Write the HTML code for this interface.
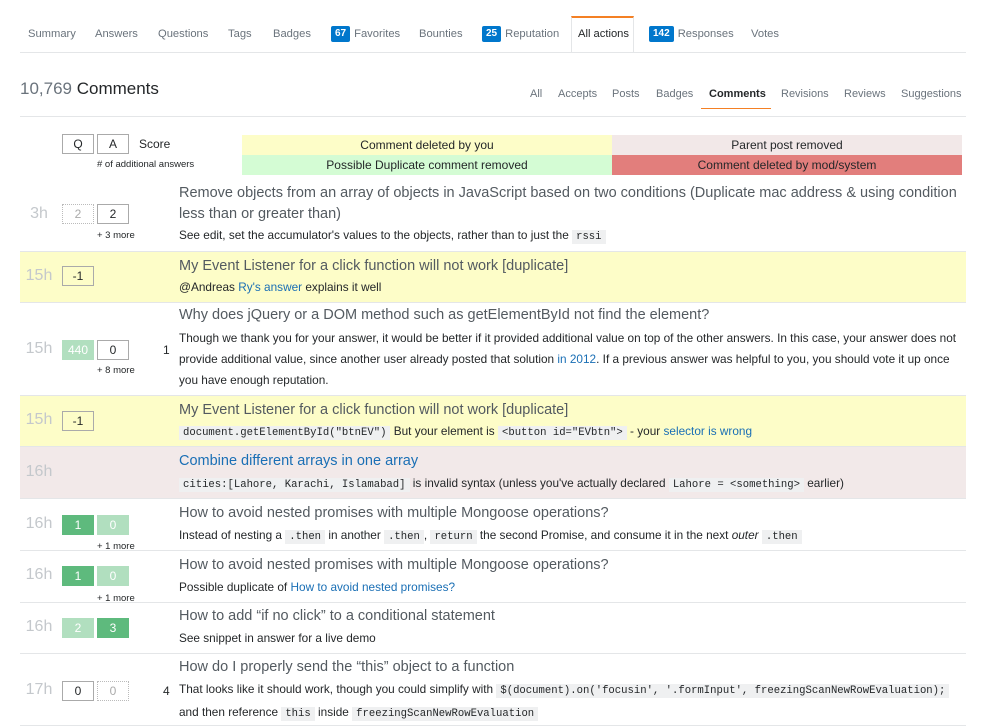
<!DOCTYPE html>
<html><head><meta charset="utf-8"><style>
*{margin:0;padding:0;box-sizing:border-box}
body{width:1008px;height:728px;overflow:hidden;background:#fff;font-family:"Liberation Sans",Arial,sans-serif;color:#242729;position:relative}
.a{position:absolute;white-space:nowrap}
.tab{position:absolute;top:28px;font-size:11.2px;color:#6a737c;line-height:13px}
.bdg{display:inline-block;background:#0077cc;color:#fff;font-size:10px;font-weight:bold;padding:2px 4px;border-radius:2px;margin-right:4px;line-height:12px;vertical-align:top;margin-top:-2px}
.st{position:absolute;top:88px;font-size:11px;color:#6a737c}
.box{position:absolute;width:32px;height:20px;border:1px solid #aaa;font-size:12px;text-align:center;line-height:18px;color:#242729}
.dot{border:1px dotted #bbb;color:#aaa}
.g1{background:#5eba7d;border-color:#5eba7d;color:#fff}
.g2{background:#b1dfbf;border-color:#b1dfbf;color:#fff}
.row{position:absolute;left:20px;width:946px;border-bottom:1px solid #e4e6e8}
.tm{position:absolute;left:0;width:38px;text-align:center;font-size:16px;color:#c4c8cc}
.tt{position:absolute;left:159px;font-size:14.5px;color:#535a60;line-height:21px}
.cm{position:absolute;left:159px;font-size:11.8px;color:#242729;line-height:21px;white-space:nowrap}
.more{position:absolute;left:77px;font-size:9.5px;color:#242729}
code{font-family:"Liberation Mono",monospace;font-size:10.6px;background:#eff0f1;padding:1px 4px}
.lk{color:#1a6fb5}
.y{background:#fdfdc8}.p{background:#f2e9e9}
</style></head><body>
<div class="tab" style="left:28px">Summary</div>
<div class="tab" style="left:95px">Answers</div>
<div class="tab" style="left:158px">Questions</div>
<div class="tab" style="left:228px">Tags</div>
<div class="tab" style="left:273px">Badges</div>
<div class="tab" style="left:331px"><span class="bdg">67</span>Favorites</div>
<div class="tab" style="left:419px">Bounties</div>
<div class="tab" style="left:482px"><span class="bdg">25</span>Reputation</div>
<div class="a" style="left:571px;top:16px;width:63px;height:37px;border:1px solid #e4e6e8;border-top:2px solid #f48024;border-bottom:none;background:#fff"></div>
<div class="tab" style="left:578px;color:#242729">All actions</div>
<div class="tab" style="left:649px"><span class="bdg">142</span>Responses</div>
<div class="tab" style="left:751px">Votes</div>
<div class="a" style="left:20px;top:52px;width:946px;height:1px;background:#e4e6e8"></div>

<div class="a" style="left:20px;top:79px;font-size:17px;color:#242729"><span style="color:#6a737c">10,769</span> Comments</div>
<div class="st" style="left:530px">All</div>
<div class="st" style="left:558px">Accepts</div>
<div class="st" style="left:612px">Posts</div>
<div class="st" style="left:656px">Badges</div>
<div class="st" style="left:709px;color:#242729;font-weight:bold">Comments</div>
<div class="a" style="left:701px;top:108px;width:70px;height:1px;background:#f48024"></div>
<div class="st" style="left:781px">Revisions</div>
<div class="st" style="left:844px">Reviews</div>
<div class="st" style="left:901px">Suggestions</div>
<div class="a" style="left:20px;top:116px;width:946px;height:1px;background:#e4e6e8"></div>

<div class="box" style="left:62px;top:134px">Q</div>
<div class="box" style="left:97px;top:134px">A</div>
<div class="a" style="left:139px;top:137px;font-size:12px">Score</div>
<div class="a" style="left:97px;top:159px;font-size:9.5px"># of additional answers</div>
<div class="a y" style="left:242px;top:135px;width:370px;height:20px;text-align:center;font-size:12px;line-height:20px">Comment deleted by you</div>
<div class="a" style="left:612px;top:135px;width:350px;height:20px;background:#f2e8e8;text-align:center;font-size:12px;line-height:20px">Parent post removed</div>
<div class="a" style="left:242px;top:155px;width:370px;height:20px;background:#d4fcd4;text-align:center;font-size:12px;line-height:20px">Possible Duplicate comment removed</div>
<div class="a" style="left:612px;top:155px;width:350px;height:20px;background:#e27e7c;text-align:center;font-size:12px;line-height:20px">Comment deleted by mod/system</div>

<div class="row" style="top:183px;height:69px">
<div class="tm" style="top:22px">3h</div>
<div class="box dot" style="left:42px;top:21px">2</div>
<div class="box" style="left:77px;top:21px">2</div>
<div class="more" style="top:47px">+ 3 more</div>
<div class="tt" style="top:0">Remove objects from an array of objects in JavaScript based on two conditions (Duplicate mac address &amp; using condition<br>less than or greater than)</div>
<div class="cm" style="top:42px">See edit, set the accumulator's values to the objects, rather than to just the <code>rssi</code></div>
</div>
<div class="row y" style="top:252px;height:51px">
<div class="tm" style="top:15px">15h</div>
<div class="box" style="left:42px;top:14px">-1</div>
<div class="tt" style="top:4px">My Event Listener for a click function will not work [duplicate]</div>
<div class="cm" style="top:25px">@Andreas <span class="lk">Ry's answer</span> explains it well</div>
</div>
<div class="row" style="top:303px;height:93px">
<div class="tm" style="top:37px">15h</div>
<div class="box g2" style="left:42px;top:37px">440</div>
<div class="box" style="left:77px;top:37px">0</div>
<div class="more" style="top:62px">+ 8 more</div>
<div class="a" style="left:143px;top:40px;font-size:12px">1</div>
<div class="tt" style="top:2px">Why does jQuery or a DOM method such as getElementById not find the element?</div>
<div class="cm" style="top:25px;white-space:normal;width:790px">Though we thank you for your answer, it would be better if it provided additional value on top of the other answers. In this case, your answer does not provide additional value, since another user already posted that solution <span class="lk">in 2012</span>. If a previous answer was helpful to you, you should vote it up once you have enough reputation.</div>
</div>
<div class="row y" style="top:396px;height:51px">
<div class="tm" style="top:15px">15h</div>
<div class="box" style="left:42px;top:15px">-1</div>
<div class="tt" style="top:4px">My Event Listener for a click function will not work [duplicate]</div>
<div class="cm" style="top:25px"><code>document.getElementById("btnEV")</code> But your element is <code>&lt;button id="EVbtn"&gt;</code> - your <span class="lk">selector is wrong</span></div>
</div>
<div class="row p" style="top:447px;height:52px">
<div class="tm" style="top:16px">16h</div>
<div class="tt lk" style="top:4px">Combine different arrays in one array</div>
<div class="cm" style="top:26px"><code>cities:[Lahore, Karachi, Islamabad]</code> is invalid syntax (unless you've actually declared <code>Lahore = &lt;something&gt;</code> earlier)</div>
</div>
<div class="row" style="top:499px;height:52px">
<div class="tm" style="top:16px">16h</div>
<div class="box g1" style="left:42px;top:16px">1</div>
<div class="box g2" style="left:77px;top:16px">0</div>
<div class="more" style="top:42px">+ 1 more</div>
<div class="tt" style="top:4px">How to avoid nested promises with multiple Mongoose operations?</div>
<div class="cm" style="top:26px">Instead of nesting a <code>.then</code> in another <code>.then</code>, <code>return</code> the second Promise, and consume it in the next <i>outer</i> <code>.then</code></div>
</div>
<div class="row" style="top:551px;height:52px">
<div class="tm" style="top:15px">16h</div>
<div class="box g1" style="left:42px;top:15px">1</div>
<div class="box g2" style="left:77px;top:15px">0</div>
<div class="more" style="top:42px">+ 1 more</div>
<div class="tt" style="top:4px">How to avoid nested promises with multiple Mongoose operations?</div>
<div class="cm" style="top:26px">Possible duplicate of <span class="lk">How to avoid nested promises?</span></div>
</div>
<div class="row" style="top:603px;height:51px">
<div class="tm" style="top:15px">16h</div>
<div class="box g2" style="left:42px;top:15px">2</div>
<div class="box g1" style="left:77px;top:15px">3</div>
<div class="tt" style="top:3px">How to add “if no click” to a conditional statement</div>
<div class="cm" style="top:25px">See snippet in answer for a live demo</div>
</div>
<div class="row" style="top:654px;height:72px">
<div class="tm" style="top:27px">17h</div>
<div class="box" style="left:42px;top:27px">0</div>
<div class="box dot" style="left:77px;top:27px">0</div>
<div class="a" style="left:143px;top:30px;font-size:12px">4</div>
<div class="tt" style="top:3px">How do I properly send the “this” object to a function</div>
<div class="cm" style="top:25px">That looks like it should work, though you could simplify with <code>$(document).on('focusin', '.formInput', freezingScanNewRowEvaluation);</code><br>and then reference <code>this</code> inside <code>freezingScanNewRowEvaluation</code></div>
</div>
</body></html>
